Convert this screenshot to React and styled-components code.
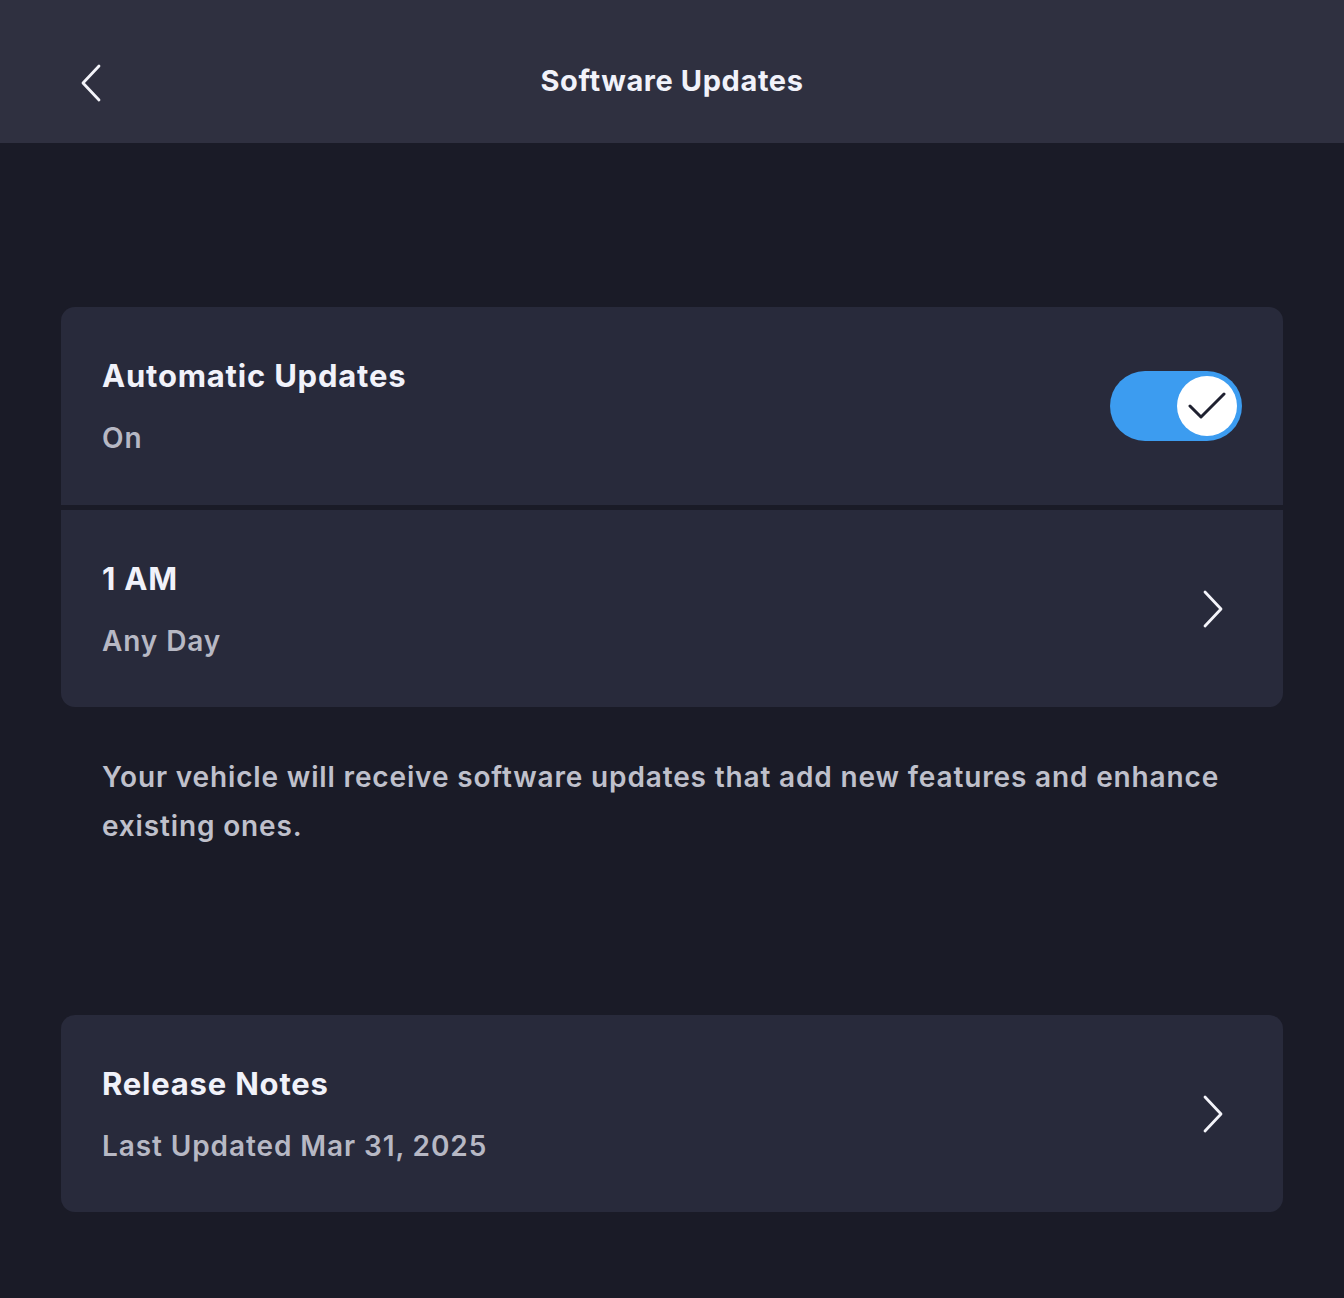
import React from 'react';
import styled, { createGlobalStyle } from 'styled-components';

const GlobalStyle = createGlobalStyle`
  html, body {
    margin: 0;
    padding: 0;
    background: #1a1b27;
  }
  body {
    font-family: Inter, "Noto Sans", sans-serif;
    -webkit-font-smoothing: antialiased;
  }
`;

const Page = styled.div`
  min-height: 1298px;
  background: #1a1b27;
`;

const Header = styled.header`
  height: 143px;
  background: #2f3040;
  display: flex;
  align-items: center;
  justify-content: center;
  position: relative;
`;

const BackButton = styled.button`
  position: absolute;
  left: 71px;
  top: 56px;
  width: 40px;
  height: 54px;
  background: none;
  border: none;
  padding: 0;
  display: flex;
  align-items: center;
  justify-content: center;
  cursor: pointer;
`;

const Title = styled.h1`
  margin: 0;
  margin-top: 18px;
  font-size: 29px;
  font-weight: 700;
  color: #f1f2fa;
  letter-spacing: 0.6px;
`;

const Content = styled.main`
  padding: 164px 61px 0;
  display: flex;
  flex-direction: column;
`;

const Group = styled.div`
  display: flex;
  flex-direction: column;
  gap: 5px;
  border-radius: 14px;
  overflow: hidden;
`;

const Row = styled.div`
  height: ${p => p.$height || 198}px;
  background: #282a3b;
  display: flex;
  align-items: center;
  justify-content: space-between;
  padding: 0 41px 0 41px;
  box-sizing: border-box;
  border-radius: ${p => p.$radius || '0'};
`;

const Texts = styled.div`
  display: flex;
  flex-direction: column;
  gap: 20px;
  margin-top: 2px;
`;

const RowTitle = styled.div`
  font-size: 31px;
  font-weight: 700;
  color: #f1f2fa;
  line-height: 42px;
  letter-spacing: 0.8px;
`;

const RowSub = styled.div`
  font-size: 28px;
  font-weight: 600;
  color: #b7b8c4;
  line-height: 42px;
  letter-spacing: 0.9px;
`;

const Description = styled.p`
  margin: 46px 0 0;
  padding: 0 41px;
  font-size: 28px;
  font-weight: 600;
  line-height: 49px;
  letter-spacing: 0.85px;
  color: #bfc0cb;
`;

const Spacer = styled.div`
  height: 164px;
`;

const Toggle = styled.div`
  width: 132px;
  height: 70px;
  border-radius: 35px;
  background: #3c9cf0;
  display: flex;
  align-items: center;
  justify-content: flex-end;
  padding: 0 5px;
  box-sizing: border-box;
`;

const Knob = styled.div`
  width: 60px;
  height: 60px;
  border-radius: 50%;
  background: #ffffff;
  display: flex;
  align-items: center;
  justify-content: center;
`;

const Chevron = ({ dir = 'right' }) => (
  <svg width="24" height="40" viewBox="0 0 24 40" fill="none">
    {dir === 'right' ? (
      <path d="M4 3 L20 20 L4 37" stroke="#f4f4fa" strokeWidth="2.8" strokeLinecap="round" strokeLinejoin="round" />
    ) : (
      <path d="M20 3 L4 20 L20 37" stroke="#f4f4fa" strokeWidth="2.8" strokeLinecap="round" strokeLinejoin="round" />
    )}
  </svg>
);

const ChevronWrap = styled.div`
  display: flex;
  align-items: center;
  margin-right: 17px;
`;

export default function App() {
  return (
    <Page>
      <GlobalStyle />
      <Header>
        <BackButton aria-label="Back">
          <Chevron dir="left" />
        </BackButton>
        <Title>Software Updates</Title>
      </Header>
      <Content>
        <Group>
          <Row $height={198}>
            <Texts>
              <RowTitle>Automatic Updates</RowTitle>
              <RowSub>On</RowSub>
            </Texts>
            <Toggle>
              <Knob>
                <svg width="38" height="30" viewBox="0 0 38 30" fill="none">
                  <path d="M2 15 L13 26 L36 3" stroke="#1f2130" strokeWidth="3" strokeLinecap="round" strokeLinejoin="round" />
                </svg>
              </Knob>
            </Toggle>
          </Row>
          <Row $height={197}>
            <Texts>
              <RowTitle>1 AM</RowTitle>
              <RowSub>Any Day</RowSub>
            </Texts>
            <ChevronWrap>
              <Chevron />
            </ChevronWrap>
          </Row>
        </Group>
        <Description>
          Your vehicle will receive software updates that add new features and enhance existing ones.
        </Description>
        <Spacer />
        <Row $height={197} $radius="14px">
          <Texts>
            <RowTitle>Release Notes</RowTitle>
            <RowSub>Last Updated Mar 31, 2025</RowSub>
          </Texts>
          <ChevronWrap>
            <Chevron />
          </ChevronWrap>
        </Row>
      </Content>
    </Page>
  );
}
